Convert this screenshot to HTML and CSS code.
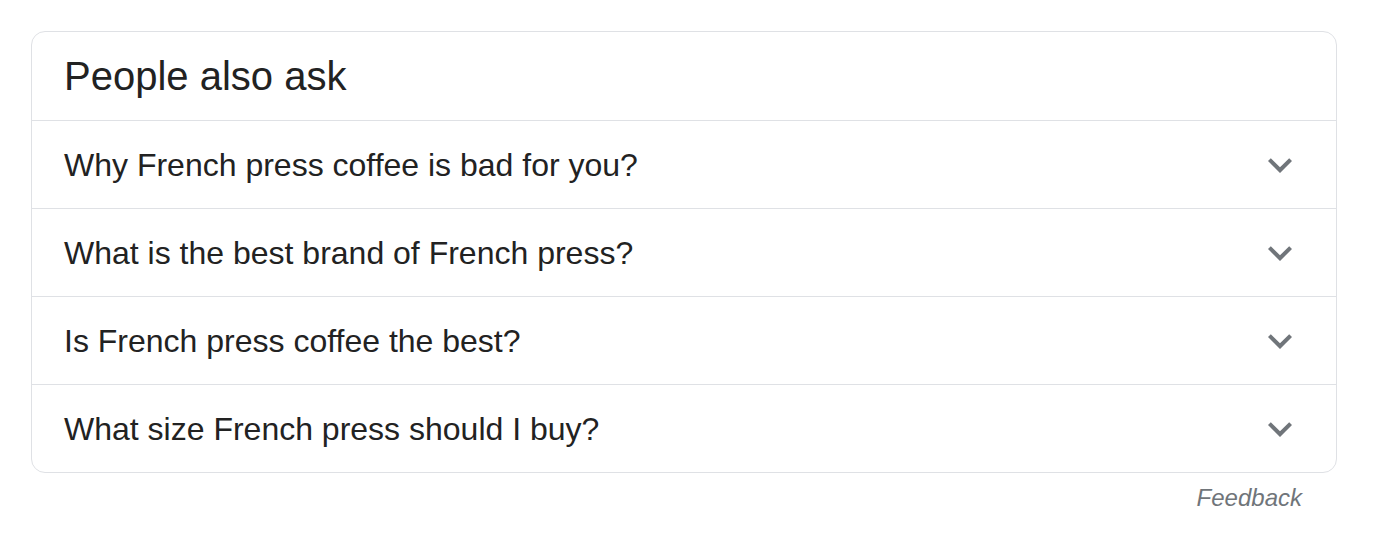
FILE: index.html
```html
<!DOCTYPE html>
<html lang="en">
<head>
<meta charset="utf-8">
<title>People also ask</title>
<link rel="stylesheet" href="styles.css">
</head>
<body>
<div class="wrap">
  <div class="card">
    <div class="card-head">People also ask</div>
    <div class="row"><span class="q">Why French press coffee is bad for you?</span><svg class="chev" viewBox="0 0 24 24"><path d="M16.59 8.59L12 13.170 7.41 8.59 6 10l6 6 6-6z"/></svg></div>
    <div class="row"><span class="q">What is the best brand of French press?</span><svg class="chev" viewBox="0 0 24 24"><path d="M16.59 8.59L12 13.17 7.41 8.59 6 10l6 6 6-6z"/></svg></div>
    <div class="row"><span class="q">Is French press coffee the best?</span><svg class="chev" viewBox="0 0 24 24"><path d="M16.59 8.59L12 13.17 7.41 8.59 6 10l6 6 6-6z"/></svg></div>
    <div class="row"><span class="q">What size French press should I buy?</span><svg class="chev" viewBox="0 0 24 24"><path d="M16.59 8.59L12 13.17 7.41 8.59 6 10l6 6 6-6z"/></svg></div>
  </div>
  <div class="feedback">Feedback</div>
</div>
</body>
</html>
```
FILE: styles.css
```css
html, body {
  margin: 0;
  padding: 0;
  background: #fff;
}
body {
  font-family: "Liberation Sans", Arial, sans-serif;
  color: #222;
}
.wrap {
  width: 1306px;
  margin: 31px 0 0 31px;
}
.card {
  border: 1px solid #dfe1e5;
  border-radius: 14px;
  overflow: hidden;
}
.card-head {
  height: 88px;
  display: flex;
  align-items: center;
  padding: 0 32px;
  font-size: 40px;
  line-height: 48px;
}
.row {
  height: 87px;
  border-top: 1px solid #dfe1e5;
  display: flex;
  align-items: center;
  justify-content: space-between;
  padding: 0 32px 0 32px;
  font-size: 32px;
  line-height: 40px;
}
.chev {
  width: 48px;
  height: 48px;
  fill: #70757a;
  flex: none;
}
.feedback {
  margin-top: 13px;
  text-align: right;
  padding-right: 35px;
  font-size: 24px;
  line-height: 24px;
  font-style: italic;
  color: #70757a;
}
```
